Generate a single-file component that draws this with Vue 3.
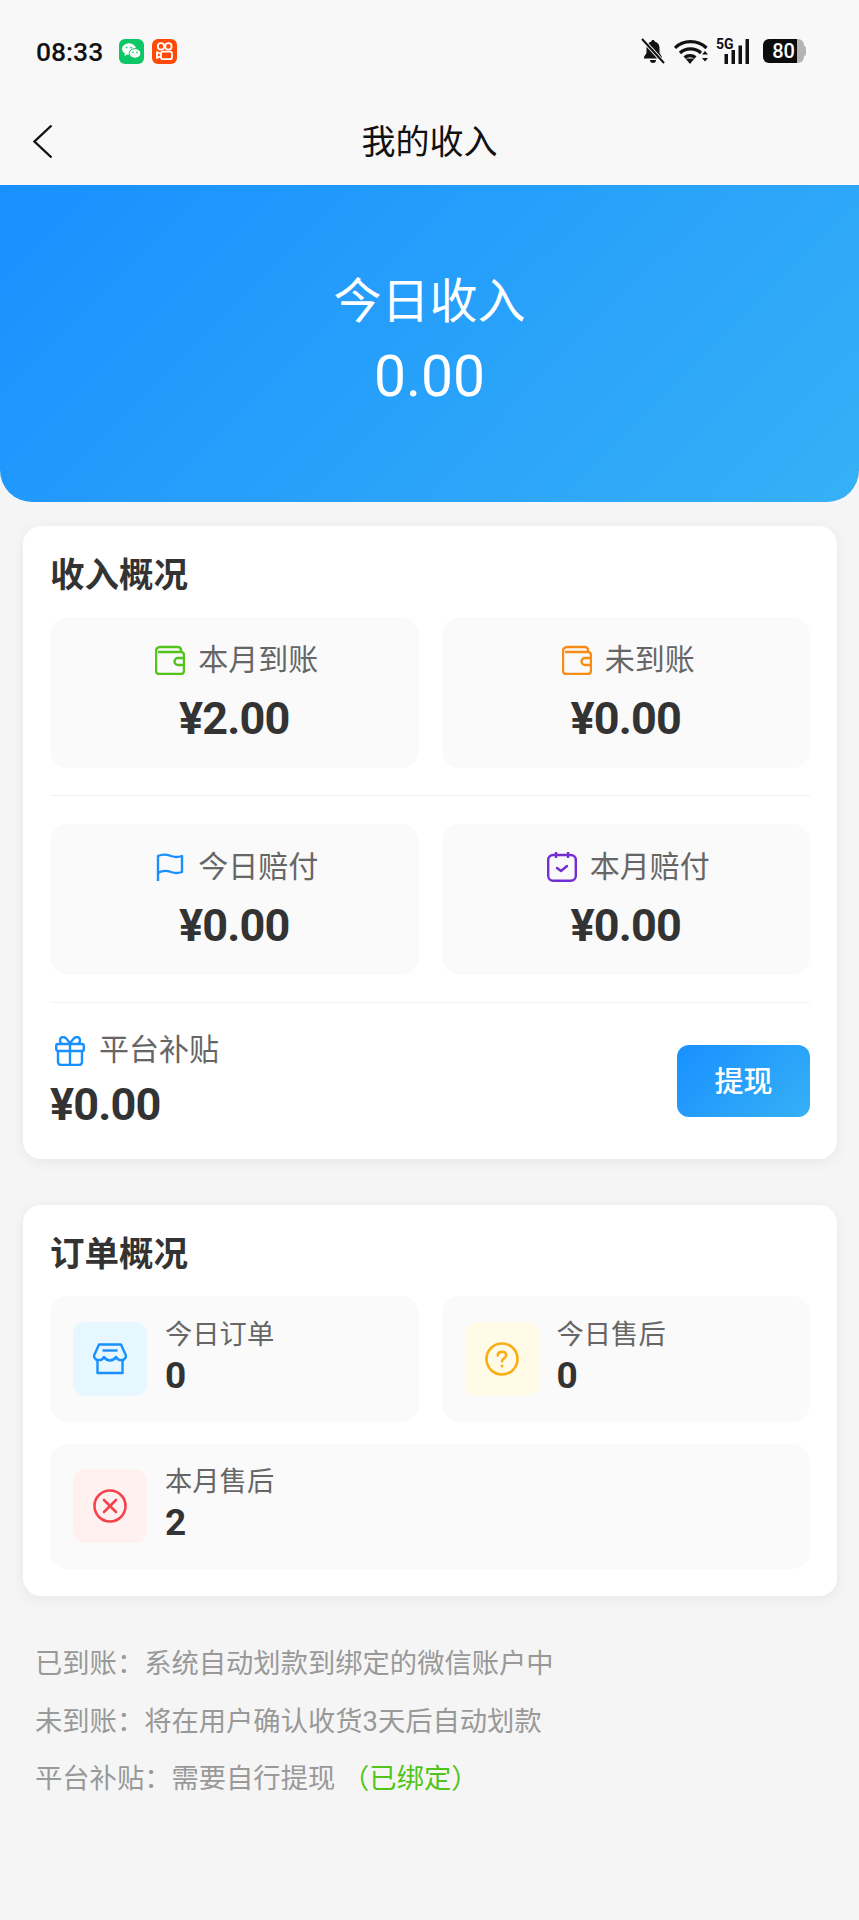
<template>
  <div class="page">
    <header class="top">
      <div class="status-bar">
        <div class="status-left">
          <span class="time">08:33</span>
          <span class="app-icon wechat">
            <svg viewBox="0 0 25 25" width="25" height="25">
              <ellipse cx="10" cy="10" rx="7" ry="5.8" fill="#fff" />
              <path d="M6 14l-.6 3 3-1.6z" fill="#fff" />
              <ellipse cx="16" cy="14.4" rx="5.8" ry="4.8" fill="#fff" stroke="#0bc766" stroke-width="1" />
              <circle cx="7.6" cy="8.6" r=".9" fill="#0bc766" />
              <circle cx="12" cy="8.6" r=".9" fill="#0bc766" />
              <circle cx="14" cy="13.4" r=".8" fill="#0bc766" />
              <circle cx="18" cy="13.4" r=".8" fill="#0bc766" />
            </svg>
          </span>
          <span class="app-icon kuaishou">
            <svg viewBox="0 0 25 25" width="25" height="25" fill="none" stroke="#fff" stroke-width="1.8">
              <circle cx="9" cy="7.4" r="3.2" />
              <circle cx="16.4" cy="7.4" r="3.2" />
              <rect x="9" y="12.6" width="11" height="7.6" rx="2" />
              <path d="M9 15l-4-2v6l4-2" stroke-linejoin="round" />
            </svg>
          </span>
        </div>
        <div class="status-right">
          <svg class="bell" viewBox="0 0 24 26" width="24" height="26">
            <path d="M12 2c-1 0-1.600.7-1.700 1.600C7 4.500 5.500 7 5.500 10v5L3 19v1.500h18V19l-2.500-4v-5c0-3-1.500-5.500-4.800-6.400C13.600 2.700 13 2 12 2z" fill="#111" />
            <path d="M9 22h6a3 3 0 0 1-6 0z" fill="#111" />
            <path d="M1 1l22 24" stroke="#f8f8f8" stroke-width="4" />
            <path d="M1 1l22 24" stroke="#111" stroke-width="2" />
          </svg>
          <svg class="wifi" viewBox="0 0 34 25" width="34" height="25" fill="none" stroke="#111" stroke-width="3.200">
            <path d="M1 9c8-8.500 23-8.500 31.500 0" />
            <path d="M6 14c5.500-5.500 15.500-5.500 21 0" />
            <path d="M10.500 18.500c3-2.500 8-2.500 11 0" />
            <path d="M11.500 19.500h9L16 25z" fill="#111" stroke="none" />
            <path d="M28 15.500h6l-3-3.500zM28 19h6l-3 3.500z" fill="#111" stroke="none" />
          </svg>
          <div class="signal">
            <span class="net-text">5G</span>
            <svg viewBox="0 0 34 25" width="34" height="25">
              <rect x="8.500" y="15" width="3.500" height="10" fill="#111" />
              <rect x="15.500" y="11" width="3.500" height="14" fill="#111" />
              <rect x="22.500" y="6.500" width="3.500" height="18.500" fill="#111" />
              <rect x="29.500" y="0" width="3.500" height="25" fill="#111" />
            </svg>
          </div>
          <span class="battery">
            <span class="battery-body">80</span>
            <span class="battery-nub"></span>
          </span>
        </div>
      </div>
      <div class="nav-bar">
        <svg class="back" viewBox="0 0 21 35" width="21" height="35" fill="none" stroke="#111" stroke-width="2.400">
          <path d="M19.500 1.500L2.500 17.500l17 16" />
        </svg>
        <span class="nav-title">我的收入</span>
      </div>
    </header>

    <section class="hero">
      <div class="hero-label">今日收入</div>
      <div class="hero-value">0.00</div>
    </section>

    <section class="card income-card">
      <h3 class="card-title">收入概况</h3>
      <div class="stat-grid">
        <div class="stat-box">
          <div class="stat-label">
            <svg viewBox="0 0 30 30" width="30" height="30" fill="none" stroke="#52c41a" stroke-width="2.400">
              <path d="M1 6a4 4 0 0 1 4-4h18a3 3 0 0 1 3 3v2" />
              <path d="M1 6v20a3 3 0 0 0 3 3h22a3 3 0 0 0 3-3V10a3 3 0 0 0-3-3H3" />
              <path d="M29 13h-6a3.500 3.500 0 0 0 0 7h6" />
            </svg>
            <span>本月到账</span>
          </div>
          <div class="stat-value">¥2.00</div>
        </div>
        <div class="stat-box">
          <div class="stat-label">
            <svg viewBox="0 0 30 30" width="30" height="30" fill="none" stroke="#fa8c16" stroke-width="2.400">
              <path d="M1 6a4 4 0 0 1 4-4h18a3 3 0 0 1 3 3v2" />
              <path d="M1 6v20a3 3 0 0 0 3 3h22a3 3 0 0 0 3-3V10a3 3 0 0 0-3-3H3" />
              <path d="M29 13h-6a3.500 3.500 0 0 0 0 7h6" />
            </svg>
            <span>未到账</span>
          </div>
          <div class="stat-value">¥0.00</div>
        </div>
      </div>
      <div class="line"></div>
      <div class="stat-grid">
        <div class="stat-box">
          <div class="stat-label">
            <svg viewBox="0 0 30 30" width="30" height="30" fill="none" stroke="#1890ff" stroke-width="2.400">
              <path d="M3 29V4c5-2.500 9-1.500 13 0s7 1.500 11 0v16c-4 1.500-7 1.500-11 0s-9-1.500-13 1" stroke-linejoin="round" />
            </svg>
            <span>今日赔付</span>
          </div>
          <div class="stat-value">¥0.00</div>
        </div>
        <div class="stat-box">
          <div class="stat-label">
            <svg viewBox="0 0 30 30" width="30" height="30" fill="none" stroke="#722ed1" stroke-width="2.400">
              <rect x="1.200" y="3" width="27.600" height="25.800" rx="5" />
              <path d="M9 0v6M21 0v6" />
              <path d="M10 16l4 3 6-5" stroke-linecap="round" stroke-linejoin="round" />
            </svg>
            <span>本月赔付</span>
          </div>
          <div class="stat-value">¥0.00</div>
        </div>
      </div>
      <div class="line"></div>
      <div class="subsidy">
        <div>
          <div class="stat-label subsidy-label">
            <svg viewBox="0 0 30 30" width="30" height="30" fill="none" stroke="#1890ff" stroke-width="2.400">
              <rect x="1.200" y="8" width="27.600" height="7" rx="2" />
              <path d="M3 15v11a3 3 0 0 0 3 3h18a3 3 0 0 0 3-3V15" />
              <path d="M15 8v21" />
              <path d="M15 8c-2-4-4-7-7-7-3.500 0-4 5-1 7M15 8c2-4 4-7 7-7 3.500 0 4 5 1 7" />
            </svg>
            <span>平台补贴</span>
          </div>
          <div class="stat-value">¥0.00</div>
        </div>
        <button type="button" class="withdraw">提现</button>
      </div>
    </section>

    <section class="card order-card">
      <h3 class="card-title">订单概况</h3>
      <div class="order-grid">
        <div class="order-box">
          <div class="order-icon blue">
            <svg viewBox="0 0 34 32" width="34" height="32" fill="none" stroke="#1890ff" stroke-width="2.400" stroke-linejoin="round">
              <path d="M6 1.500h22l4 9a4 4 0 0 1-3.500 6.500c-2.300.6-4-.6-5.500-3-1.500 2.400-3.500 3.500-6 3.500s-4.500-1.100-6-3.500c-1.500 2.400-3.200 3.600-5.500 3A4 4 0 0 1 2 10.500z" />
              <path d="M9.500 7.500h15" />
              <path d="M4.500 18v12h25V18" />
            </svg>
          </div>
          <div>
            <div class="order-label">今日订单</div>
            <div class="order-value">0</div>
          </div>
        </div>
        <div class="order-box">
          <div class="order-icon yellow">
            <svg viewBox="0 0 34 34" width="34" height="34" fill="none" stroke="#faad14" stroke-width="2.600">
              <circle cx="17" cy="17" r="15.500" />
              <path d="M12.800 13.500c0-2.400 1.800-3.800 4.200-3.800s4.200 1.400 4.200 3.500c0 3-4.200 3-4.200 6" stroke-linecap="round" />
              <circle cx="17" cy="24" r="1.500" fill="#faad14" stroke="none" />
            </svg>
          </div>
          <div>
            <div class="order-label">今日售后</div>
            <div class="order-value">0</div>
          </div>
        </div>
        <div class="order-box wide">
          <div class="order-icon red">
            <svg viewBox="0 0 34 34" width="34" height="34" fill="none" stroke="#f5424d" stroke-width="2.600">
              <circle cx="17" cy="17" r="15.500" />
              <path d="M11 11l12 12M23 11L11 23" stroke-linecap="round" />
            </svg>
          </div>
          <div>
            <div class="order-label">本月售后</div>
            <div class="order-value">2</div>
          </div>
        </div>
      </div>
    </section>

    <div class="notes">
      <p>已到账：系统自动划款到绑定的微信账户中</p>
      <p>未到账：将在用户确认收货3天后自动划款</p>
      <p>平台补贴：需要自行提现 <span class="bound">（已绑定）</span></p>
    </div>
  </div>
</template>

<script setup>
</script>

<style>
body {
  background: #f5f5f5;
}
</style>

<style scoped>
.page {
  min-height: 1920px;
  background: #f5f5f5;
  font-family: Roboto, "Noto Sans CJK SC", sans-serif;
}

.top {
  height: 185px;
  background: #f8f8f8;
}

.status-bar {
  display: flex;
  align-items: center;
  justify-content: space-between;
  height: 102px;
  padding: 0 53px 0 36px;
}

.status-left,
.status-right {
  display: flex;
  align-items: center;
}

.time {
  width: 83px;
  font-size: 26.5px;
  font-weight: 500;
  color: #111;
}

.app-icon {
  display: flex;
  width: 25px;
  height: 25px;
  border-radius: 6px;
  margin-right: 8px;
}

.wechat {
  background: #0bc766;
}

.kuaishou {
  background: #ff4906;
}

.bell {
  margin-right: 9px;
}

.wifi {
  margin-right: 8px;
}

.signal {
  position: relative;
  display: flex;
  margin-right: 13px;
}

.net-text {
  position: absolute;
  left: 0;
  top: -2px;
  font-size: 14px;
  font-weight: 700;
  line-height: 14px;
  color: #111;
}

.battery {
  display: flex;
  align-items: center;
}

.battery-body {
  width: 41px;
  height: 24px;
  border-radius: 6px;
  background: linear-gradient(90deg, #0c0c0c 82%, #b4b4b4 82%);
  color: #fff;
  font-size: 20px;
  font-weight: 500;
  line-height: 24px;
  text-align: center;
}

.battery-nub {
  width: 2px;
  height: 10px;
  border-radius: 0 2px 2px 0;
  background: #b4b4b4;
}

.nav-bar {
  position: relative;
  display: flex;
  align-items: center;
  justify-content: center;
  height: 79px;
}

.back {
  position: absolute;
  left: 32px;
  top: 22px;
}

.nav-title {
  padding-bottom: 4px;
  font-size: 34px;
  color: #111;
}

.hero {
  height: 317px;
  box-sizing: border-box;
  padding-top: 84px;
  border-radius: 0 0 32px 32px;
  background: linear-gradient(135deg, #1890ff, #36b0f6);
  color: #fff;
  text-align: center;
}

.hero-label {
  font-size: 48px;
  line-height: 66px;
}

.hero-value {
  margin-top: 9px;
  font-size: 57px;
  line-height: 66px;
}

.card {
  margin: 24px 22px 0 23px;
  padding: 28px 27px 0;
  border-radius: 18px;
  background: #fff;
  box-shadow: 0 3px 14px rgba(0, 0, 0, 0.06);
}

.income-card {
  height: 633px;
  box-sizing: border-box;
}

.order-card {
  height: 391px;
  box-sizing: border-box;
  margin-top: 46px;
}

.card-title {
  margin: 0 0 21px;
  font-size: 34.500px;
  font-weight: 700;
  line-height: 42px;
  color: #333;
}

.stat-grid {
  display: grid;
  grid-template-columns: 1fr 1fr;
  gap: 23px;
}

.stat-box {
  height: 151px;
  box-sizing: border-box;
  padding-top: 22px;
  border-radius: 18px;
  background: #fafafa;
  text-align: center;
}

.stat-label {
  display: flex;
  align-items: center;
  justify-content: center;
  gap: 13px;
  height: 40px;
  padding-left: 5px;
  font-size: 30px;
  color: #666;
}

.stat-label span {
  padding-bottom: 4px;
}

.stat-label svg {
  margin-top: 2px;
}

.stat-value {
  margin-top: 14px;
  font-size: 45px;
  font-weight: 700;
  letter-spacing: -0.8px;
  line-height: 52px;
  color: #333;
}

.line {
  height: 1px;
  margin: 27px 0 28px;
  background: #f2f2f2;
}

.subsidy {
  display: flex;
  align-items: center;
  justify-content: space-between;
}

.subsidy-label {
  justify-content: flex-start;
  gap: 14px;
  padding-left: 5px;
}

.subsidy-label span {
  padding-bottom: 8px;
}

.subsidy-label svg {
  margin-top: 0;
}

.subsidy .stat-value {
  margin-top: 8px;
}

.withdraw {
  width: 133px;
  height: 72px;
  padding: 0 0 4px;
  border: none;
  border-radius: 12px;
  background: linear-gradient(135deg, #1890ff, #36b0f6);
  color: #fff;
  font-family: inherit;
  font-size: 29px;
  font-weight: 500;
}

.order-grid {
  display: grid;
  grid-template-columns: 1fr 1fr;
  gap: 22px 23px;
}

.order-box {
  display: flex;
  align-items: center;
  gap: 18px;
  height: 125.5px;
  box-sizing: border-box;
  padding-left: 23px;
  border-radius: 18px;
  background: #fafafa;
}

.wide {
  grid-column: span 2;
}

.order-icon {
  display: flex;
  align-items: center;
  justify-content: center;
  width: 74px;
  height: 74px;
  border-radius: 12px;
}

.blue {
  background: #e6f7ff;
}

.yellow {
  background: #fffbe6;
}

.red {
  background: #fff1f0;
}

.order-label {
  font-size: 27.300px;
  line-height: 38px;
  color: #666;
}

.order-value {
  padding-bottom: 4px;
  font-size: 37px;
  font-weight: 700;
  line-height: 44px;
  color: #333;
}

.notes {
  margin-top: 40px;
  padding-left: 35px;
  font-size: 27.300px;
  line-height: 57.5px;
  color: #999;
}

.notes p {
  margin: 0;
}

.bound {
  color: #52c41a;
}
</style>
